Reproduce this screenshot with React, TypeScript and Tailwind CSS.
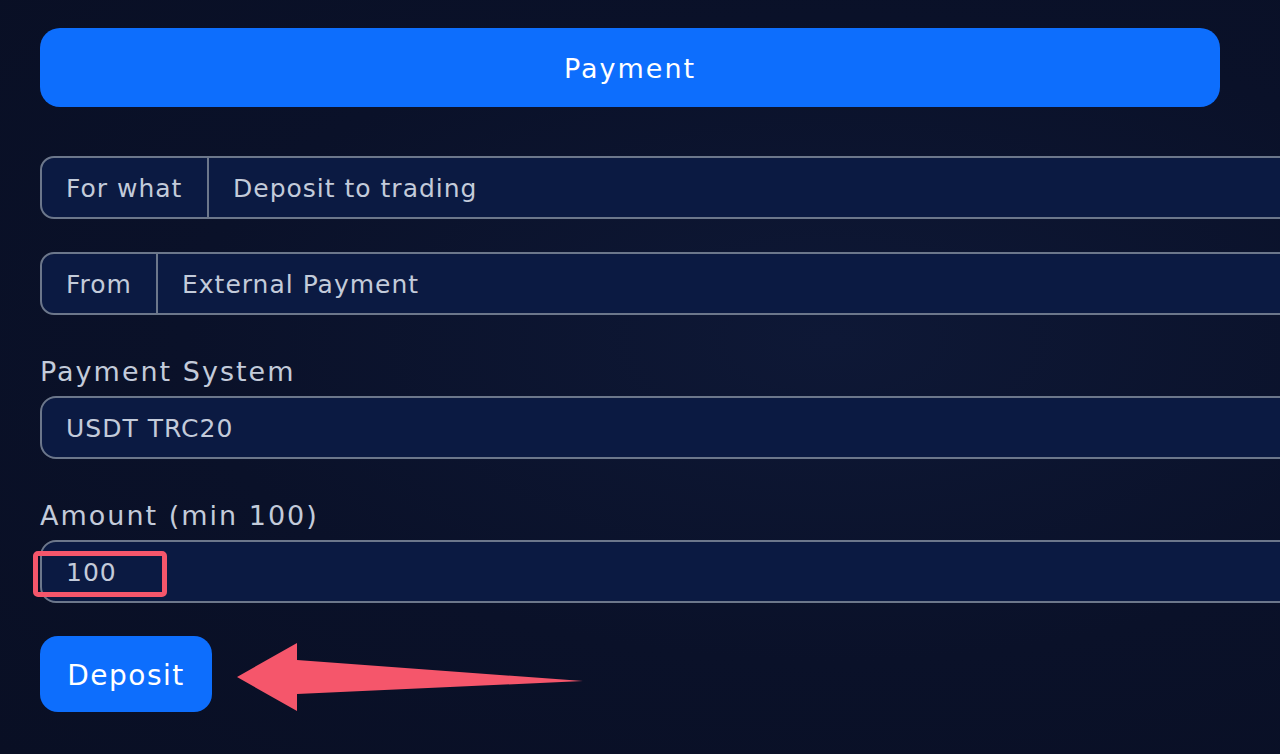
export default function App() {
  const font = { fontFamily: "'DejaVu Sans', 'Liberation Sans', sans-serif" };

  return (
    <div
      className="relative w-[1280px] h-[754px] overflow-hidden bg-[radial-gradient(ellipse_at_65%_45%,#0e1836_0%,#0a1129_55%,#090f24_100%)] text-[#c3cbda]"
      style={font}
    >
      <div className="pl-[40px] pt-[28px]">
        {/* Header button */}
        <button className="w-[1180px] h-[79px] pt-[3px] rounded-[20px] bg-[#0d6efd] text-white text-[27px] tracking-[2px]">
          Payment
        </button>

        {/* For what */}
        <div className="mt-[49px] w-[1300px] h-[63px] flex rounded-[14px] border-2 border-[#6c778b] bg-[#0b1a42] overflow-hidden text-[25px] tracking-[1px]">
          <div className="w-[167px] flex items-center pt-[3px] pl-[24px] border-r-2 border-[#6c778b]">For what</div>
          <div className="flex-1 flex items-center pt-[3px] pl-[24px]">Deposit to trading</div>
        </div>

        {/* From */}
        <div className="mt-[33px] w-[1300px] h-[63px] flex rounded-[14px] border-2 border-[#6c778b] bg-[#0b1a42] overflow-hidden text-[25px] tracking-[1px]">
          <div className="w-[116px] flex items-center pt-[3px] pl-[24px] border-r-2 border-[#6c778b]">From</div>
          <div className="flex-1 flex items-center pt-[3px] pl-[24px]">External Payment</div>
        </div>

        {/* Payment system */}
        <div className="mt-[40px] h-[34px] mb-[7px] text-[27px] leading-[34px] tracking-[2px]">Payment System</div>
        <div className="w-[1300px] h-[63px] flex items-center pt-[3px] rounded-[16px] border-2 border-[#6c778b] bg-[#0b1a42] pl-[24px] text-[25px] tracking-[1px]">
          USDT TRC20
        </div>

        {/* Amount */}
        <div className="mt-[40px] h-[34px] mb-[7px] text-[27px] leading-[34px] tracking-[2px]">Amount (min 100)</div>
        <div className="relative w-[1300px] h-[63px] flex items-center pt-[3px] rounded-[16px] border-2 border-[#6c778b] bg-[#0b1a42] pl-[24px] text-[25px] tracking-[1px]">
          100
          <div className="absolute left-[-9px] top-[9px] w-[134px] h-[46px] rounded-[5px] border-[5px] border-[#f5566b]" />
        </div>

        {/* Submit */}
        <div className="mt-[33px] flex items-center">
          <button className="w-[172px] h-[76px] pt-[3px] rounded-[18px] bg-[#0d6efd] text-white text-[28px] tracking-[1.5px]">
            Deposit
          </button>
          <svg width="380" height="76" viewBox="0 0 380 76" className="ml-[20px]">
            <polygon
              points="5,41 65,7 65,24 351,45 65,58 65,75"
              fill="#f5566b"
            />
          </svg>
        </div>
      </div>
    </div>
  );
}
